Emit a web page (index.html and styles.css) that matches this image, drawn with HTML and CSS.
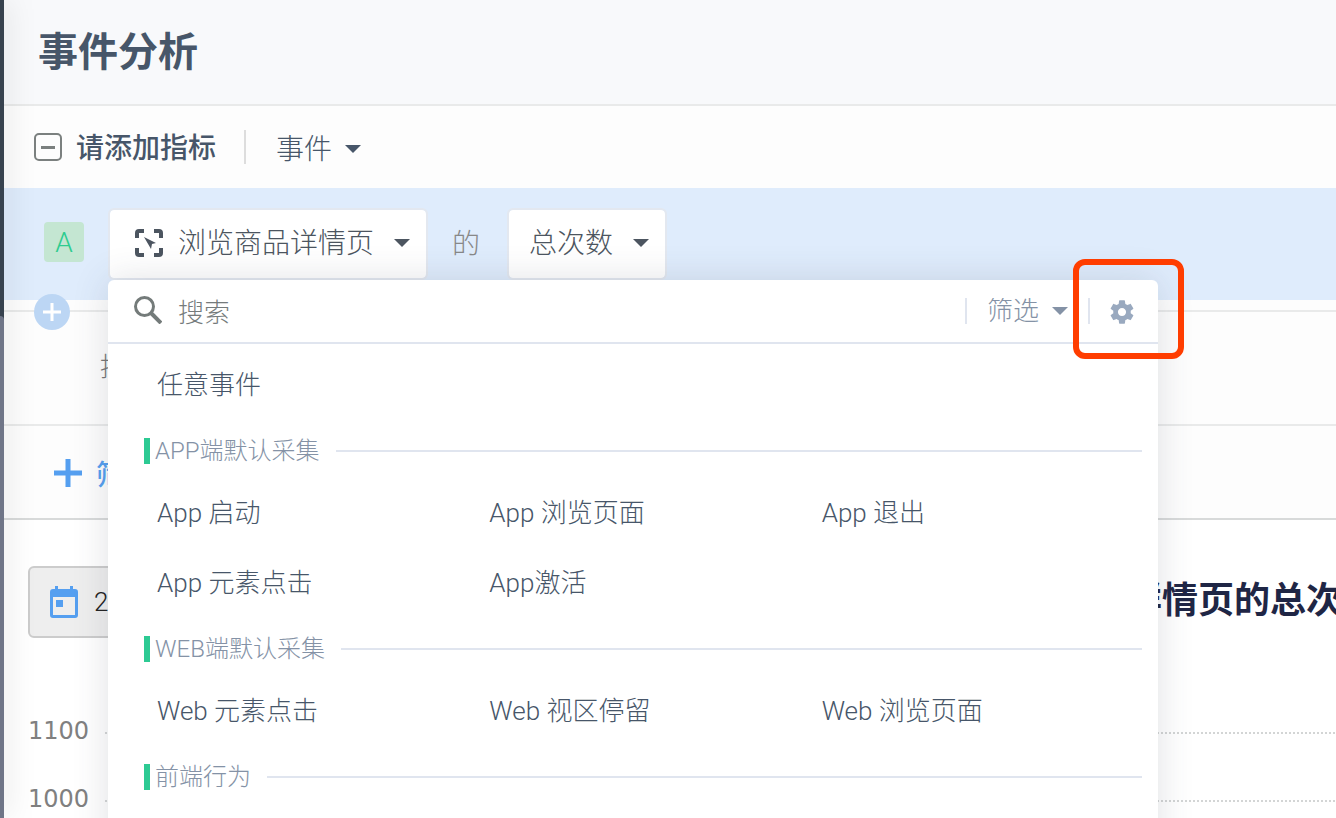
FILE: index.html
```html
<!DOCTYPE html>
<html lang="zh-CN">

<head>
    <meta charset="UTF-8">
    <meta name="viewport" content="width=device-width, initial-scale=1.0">
    <title>事件分析</title>
    <link rel="stylesheet" href="styles.css">
</head>

<body>
    <div class="wrap">
        <div class="sidebar">
            <div class="sidebar-top"></div>
            <div class="sidebar-rest"></div>
        </div>
        <div class="main">
            <header class="page-head">
                <h1>事件分析</h1>
            </header>

            <div class="metric-head">
                <button class="fold" aria-label="收起">
                    <svg width="28" height="28" viewBox="0 0 28 28"><rect x="1" y="1" width="26" height="26" rx="4" fill="none" stroke="#7b807f" stroke-width="2"/><path d="M7 14.500h14" stroke="#7b807f" stroke-width="3"/></svg>
                </button>
                <h2>请添加指标</h2>
                <label class="pick pick-type">
                    <select aria-label="指标类型"><option>事件</option></select>
                    <svg class="caret" viewBox="0 0 16 8"><path d="M0 0h16L8 8z"/></svg>
                </label>
            </div>

            <div class="metric-row">
                <span class="badge">A</span>
                <button class="box event-btn">
                    <svg width="30" height="30" viewBox="0 0 30 30" fill="none" stroke="#4c5560" stroke-width="4"><path d="M3 10V5q0-2 2-2h5M20 3h5q2 0 2 2v5M27 20v5q0 2-2 2h-5M10 27H5q-2 0-2-2v-5"/><path d="M10 9l12 6-4 1-1 5z" fill="#4c5560" stroke="none"/></svg>
                    <span>浏览商品详情页</span>
                    <svg class="caret" viewBox="0 0 16 8"><path d="M0 0h16L8 8z"/></svg>
                </button>
                <span class="of">的</span>
                <label class="box pick pick-count">
                    <select aria-label="统计方式"><option>总次数</option></select>
                    <svg class="caret" viewBox="0 0 16 8"><path d="M0 0h16L8 8z"/></svg>
                </label>

                <button class="add" aria-label="添加指标">
                    <svg width="18" height="18" viewBox="0 0 18 18"><path d="M9 0v18M0 9h18" stroke="#fff" stroke-width="3"/></svg>
                </button>

                <div class="panel">
                    <div class="search">
                        <svg class="search-icon" width="28" height="28" viewBox="0 0 28 28" fill="none" stroke="#747b7a"><circle cx="10.500" cy="10.500" r="9" stroke-width="3"/><path d="M17 17l10 10" stroke-width="4"/></svg>
                        <input type="text" placeholder="搜索" aria-label="搜索">
                        <label class="pick pick-filter">
                            <select aria-label="筛选"><option>筛选</option></select>
                            <svg class="caret" viewBox="0 0 16 8"><path d="M0 0h16L8 8z"/></svg>
                        </label>
                        <button class="setting" aria-label="设置">
                            <svg width="28" height="28" viewBox="0 0 24 24" fill="#99a9bf"><path d="M19.430 12.980c.04-.32.07-.64.07-.98s-.03-.66-.07-.98l2.110-1.650c.19-.15.24-.42.12-.64l-2-3.460c-.12-.22-.39-.3-.61-.22l-2.490 1c-.52-.4-1.080-.73-1.690-.98l-.38-2.650C14.460 2.180 14.250 2 14 2h-4c-.25 0-.46.18-.49.42l-.38 2.650c-.61.25-1.170.59-1.690.98l-2.490-1c-.23-.09-.49 0-.61.22l-2 3.460c-.13.22-.07.49.12.64l2.110 1.650c-.04.32-.07.65-.07.98s.03.66.07.98l-2.110 1.650c-.19.15-.24.42-.12.64l2 3.460c.12.22.39.3.61.22l2.490-1c.52.4 1.080.73 1.690.98l.38 2.650c.03.24.24.42.49.42h4c.25 0 .46-.18.49-.42l.38-2.650c.61-.25 1.170-.59 1.690-.98l2.490 1c.23.09.49 0 .61-.22l2-3.460c.12-.22.07-.49-.12-.64l-2.110-1.650zM12 15.500c-1.930 0-3.500-1.570-3.500-3.500s1.570-3.500 3.500-3.500 3.500 1.570 3.500 3.500-1.570 3.500-3.500 3.500z"/></svg>
                        </button>
                        <div class="mark"></div>
                    </div>

                    <div class="list">
                        <ul class="items">
                            <li>任意事件</li>
                        </ul>
                        <h3>APP端默认采集</h3>
                        <ul class="items">
                            <li>App 启动</li>
                            <li>App 浏览页面</li>
                            <li>App 退出</li>
                            <li>App 元素点击</li>
                            <li>App激活</li>
                        </ul>
                        <h3>WEB端默认采集</h3>
                        <ul class="items">
                            <li>Web 元素点击</li>
                            <li>Web 视区停留</li>
                            <li>Web 浏览页面</li>
                        </ul>
                        <h3>前端行为</h3>
                    </div>
                </div>
            </div>

            <div class="gap-row"></div>
            <div class="group-row">按</div>
            <div class="filter-row">
                <button class="filter-btn">
                    <svg width="28" height="28" viewBox="0 0 28 28"><path d="M14 0v28M0 14h28" stroke="#559ff0" stroke-width="5"/></svg>
                    <span>筛选条件</span>
                </button>
            </div>

            <div class="report">
                <div class="report-head">
                    <button class="date">
                        <svg width="28" height="32" viewBox="0 0 28 32" fill="#559ff0"><path fill-rule="evenodd" d="M3 3h2V0h3v3h12V0h3v3h2q3 0 3 3v23q0 3-3 3H3q-3 0-3-3V6q0-3 3-3zM3 11v18h22V11zM6 14h7v7H6z"/></svg>
                        <span>2018</span>
                    </button>
                    <h2>浏览商品详情页的总次数</h2>
                </div>
                <div class="chart">
                    <div class="tick"><span>1100</span></div>
                    <div class="tick"><span>1000</span></div>
                </div>
            </div>
        </div>
    </div>
</body>

</html>
```
FILE: styles.css
```css
* {
    box-sizing: border-box;
}

body {
    margin: 0;
    font-family: Roboto, "Noto Sans CJK SC", sans-serif;
    font-weight: 300;
    font-size: 26px;
    color: #475669;
    background: #fff;
}

h1, h2, h3, ul {
    margin: 0;
    padding: 0;
}

button, select, input {
    font: inherit;
    color: inherit;
    border: 0;
    padding: 0;
    margin: 0;
    background: none;
}

select {
    appearance: none;
}

svg {
    display: block;
    flex: none;
}

.wrap {
    display: flex;
    height: 100vh;
    overflow: hidden;
}

/* sidebar edge */
.sidebar {
    position: relative;
    z-index: 1;
    display: flex;
    flex-direction: column;
    width: 4px;
    background: #37424e;
    box-shadow: 0 0 28px rgba(0, 0, 0, 0.34);
}

.sidebar-top {
    height: 316px;
}

.sidebar-rest {
    flex: 1;
    background: #6f7587;
    border-top-right-radius: 4px;
}

.main {
    flex: 1;
    min-width: 0;
}

.page-head {
    display: flex;
    align-items: center;
    height: 106px;
    padding: 2px 0 0 34px;
    background: #f8f9fb;
    border-bottom: 2px solid #e9eaea;
}

.page-head h1 {
    font-size: 40px;
    font-weight: 700;
    line-height: 60px;
}

.metric-head {
    display: flex;
    align-items: center;
    height: 82px;
    padding-left: 30px;
    background: #fdfdfd;
}

.metric-head h2 {
    height: 34px;
    margin-left: 14px;
    padding-right: 28px;
    font-size: 28px;
    font-weight: 500;
    line-height: 38px;
    border-right: 2px solid #ddd;
}

/* drop-downs */
.pick {
    display: flex;
    align-items: center;
}

.caret {
    width: 16px;
    height: 8px;
    fill: currentColor;
}

.pick-type {
    gap: 12px;
    margin-left: 30px;
    padding-top: 4px;
    font-size: 28px;
}

.metric-row {
    position: relative;
    display: flex;
    align-items: center;
    height: 112px;
    padding-left: 40px;
    font-size: 28px;
    background: #dfecfc;
}

.badge {
    width: 40px;
    height: 40px;
    line-height: 42px;
    margin-bottom: 4px;
    text-align: center;
    color: #2ecc8f;
    background: #c4e6d2;
    border-radius: 4px;
}

.box {
    display: flex;
    align-items: center;
    height: 72px;
    padding: 0 16px 2px;
    color: #4c5560;
    background: #fff;
    background-clip: padding-box;
    border: 2px solid #e3e8f0;
    border-radius: 6px;
}

.event-btn {
    margin-left: 24px;
    padding-left: 24px;
}

.event-btn span {
    margin: 0 20px 4px 14px;
}

.of {
    margin: 0 27px 4px 24px;
    color: #888;
}

.pick-count {
    gap: 19px;
    padding-left: 20px;
}

.add {
    position: absolute;
    left: 30px;
    bottom: -30px;
    display: flex;
    align-items: center;
    justify-content: center;
    width: 36px;
    height: 36px;
    background: #bcd6f4;
    border-radius: 50%;
}

/* event menu */
.panel {
    position: absolute;
    top: 92px;
    left: 104px;
    right: 178px;
    padding-bottom: 60px;
    font-size: 26px;
    background: #fff;
    border-radius: 6px;
    box-shadow: 0 0 36px rgba(60, 70, 90, 0.16);
}

.search {
    position: relative;
    display: flex;
    align-items: center;
    height: 64px;
    padding: 0 22px 0 26px;
    border-bottom: 2px solid #e0e5ef;
}

.search-icon {
    margin-bottom: 2px;
}

.search input {
    flex: 1;
    min-width: 0;
    margin-left: 16px;
    padding-top: 4px;
    outline: none;
}

.search input::placeholder {
    color: #757b7c;
}

.pick-filter {
    gap: 12px;
    padding: 0 20px;
    height: 26px;
    line-height: 26px;
    color: #8492a6;
    border-left: 2px solid #e0e5ef;
    border-right: 2px solid #e0e5ef;
}

.setting {
    padding: 2px 0 0 18px;
}

.mark {
    position: absolute;
    top: -21px;
    right: -26px;
    width: 111px;
    height: 100px;
    border: 6px solid #ff3d00;
    border-radius: 12px;
    pointer-events: none;
}

.list {
    padding: 6px 16px 0 36px;
}

.items {
    display: grid;
    grid-template-columns: repeat(3, 1fr);
    margin-right: -12px;
    padding-left: 13px;
    list-style: none;
}

.items li {
    height: 70px;
    line-height: 70px;
}

.list h3 {
    display: flex;
    align-items: center;
    height: 58px;
    padding-top: 4px;
    font-size: 24px;
    font-weight: 300;
    line-height: 26px;
    color: #8492a6;
}

.list h3::before {
    content: "";
    width: 6px;
    height: 26px;
    margin-right: 5px;
    background: #2dca93;
}

.list h3::after {
    content: "";
    flex: 1;
    height: 2px;
    margin-left: 16px;
    background: #e0e5ef;
}

.gap-row {
    height: 12px;
    background: #fdfdfd;
    border-bottom: 2px solid #e9eaea;
}

.group-row {
    height: 114px;
    padding-left: 96px;
    line-height: 110px;
    color: #777;
    background: #fdfdfd;
    border-bottom: 2px solid #e9eaea;
}

.filter-row {
    display: flex;
    align-items: center;
    height: 94px;
    padding: 2px 0 0 50px;
    background: #fdfdfd;
    border-bottom: 2px solid #d8dada;
}

.filter-btn {
    display: flex;
    align-items: center;
    gap: 14px;
    font-size: 28px;
    font-weight: 500;
    color: #559ff0;
}

/* report */
.report {
    padding: 46px 0 0 24px;
}

.report-head {
    display: flex;
    align-items: center;
    justify-content: space-between;
    height: 72px;
}

.date {
    display: flex;
    align-items: center;
    gap: 16px;
    width: 400px;
    height: 72px;
    padding-left: 20px;
    color: #222;
    background: #eee;
    border: 2px solid #ccc;
    border-radius: 6px;
}

.report-head h2 {
    margin-right: -42px;
    padding-bottom: 10px;
    font-size: 36px;
    font-weight: 700;
    white-space: nowrap;
    color: #1f2645;
}

.chart {
    padding-top: 58px;
    font-family: "DejaVu Sans", sans-serif;
    font-size: 24px;
    font-weight: 400;
    color: #808080;
}

.tick {
    display: flex;
    align-items: center;
    height: 68px;
}

.tick span {
    padding-top: 2px;
}

.tick::after {
    content: "";
    flex: 1;
    height: 2px;
    margin: 6px 0 0 16px;
    background: repeating-linear-gradient(90deg, #d3d5d5 0 2px, transparent 2px 4px);
}
```
